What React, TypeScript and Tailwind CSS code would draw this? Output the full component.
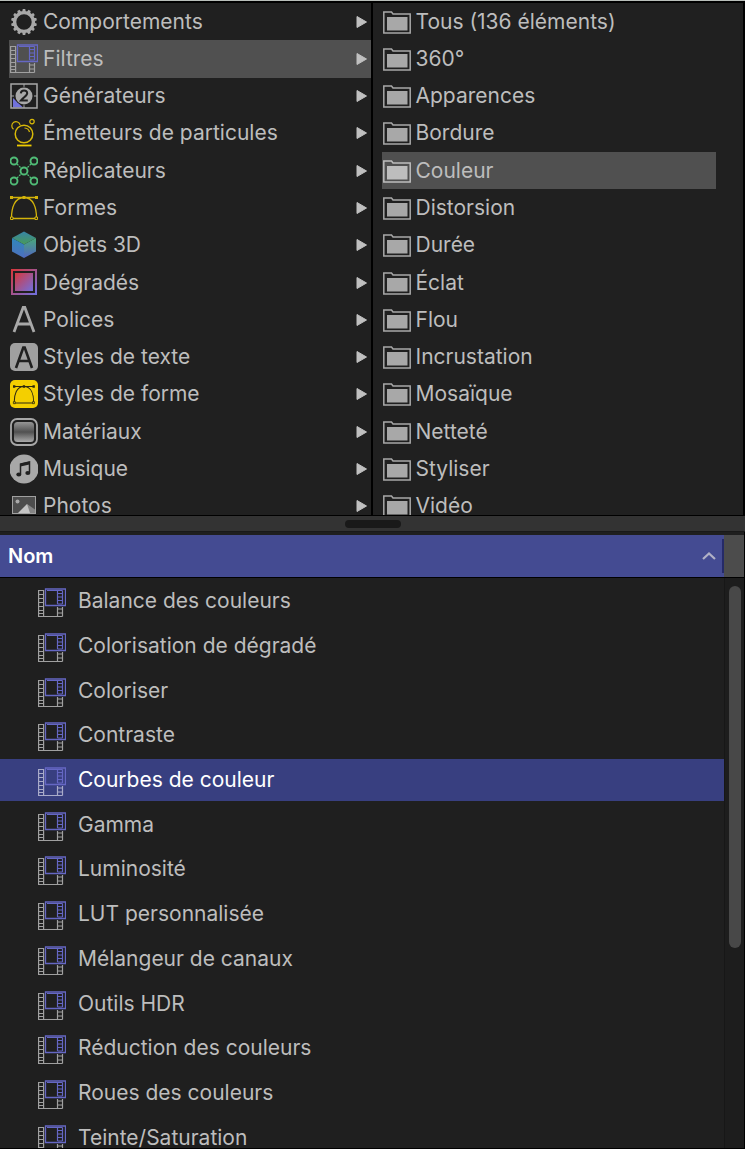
import { useState } from "react";
import type { ReactNode } from "react";
import clsx from "clsx";

type Categorie = {
    nom: string;
    icone: ReactNode;
};

const dossiers = [
    "Tous (136 éléments)", "360°", "Apparences", "Bordure", "Couleur", "Distorsion", "Durée",
    "Éclat", "Flou", "Incrustation", "Mosaïque", "Netteté", "Styliser", "Vidéo",
];

const filtres = [
    "Balance des couleurs", "Colorisation de dégradé", "Coloriser", "Contraste", "Courbes de couleur",
    "Gamma", "Luminosité", "LUT personnalisée", "Mélangeur de canaux", "Outils HDR",
    "Réduction des couleurs", "Roues des couleurs", "Teinte/Saturation",
];

function Icone({ children }: { children: ReactNode }) {
    return (
        <svg viewBox="0 0 28 30" className="w-7 h-[30px] shrink-0" fill="none" aria-hidden="true">
            {children}
        </svg>
    );
}

function IconeFiltre({ clair = false }: { clair?: boolean }) {
    const gris = clair ? "#a9abc9" : "#a0a0a0";
    return (
        <Icone>
            <path d="M.6 2.500h5v26h-5zM.5 6.500h5M.5 10.500h5M.5 14.500h5M.5 18.500h5M.5 22.500h5M.5 25.500h5" stroke={gris} strokeWidth="1.200" />
            <path d="M5 28.500h19.500M19.500 19v9.500M24.500 19v9.500M19.500 21h5M19.500 25h5" stroke={gris} strokeWidth="1.200" />
            <path d="M7.500 1h20v16.500h-20z" stroke="#6567c4" strokeWidth="1.300" />
            <path d="M9 2.500h15.500M19.500 2.500v13.500M24.500 2.500v13.500M19.500 5.500h5M19.500 9h5M19.500 12.500h5M19.500 16h5" stroke="#6567c4" strokeWidth="1.200" />
        </Icone>
    );
}

function IconeEngrenage() {
    const dents = Array.from({ length: 14 }, (_, i) => (i * 360) / 14);
    return (
        <Icone>
            <circle cx="14" cy="15" r="9.400" stroke="#a8a8a8" strokeWidth="3.400" />
            {dents.map((a) => (
                <path key={a} d="M12.200 4.800l.6-2.700h2.400l.6 2.700z" fill="#a8a8a8" transform={`rotate(${a} 14 15)`} />
            ))}
        </Icone>
    );
}

function IconeGenerateur() {
    return (
        <Icone>
            <path d="M3 17v9.500h10z" fill="#7172dc" />
            <rect x="1" y="3" width="26" height="24" stroke="#a8a8a8" strokeWidth="1.500" />
            <path d="M14 3v3M14 24v3M1 15h3M24 15h3" stroke="#a8a8a8" />
            <circle cx="14" cy="15" r="9.300" fill="#202020" />
            <circle cx="14" cy="15" r="8.500" fill="#a8a8a8" />
            <path d="M10.800 12.400c.2-3.900 6.400-3.900 6.400-.2 0 2.300-3.500 4-6.200 7.300h6.800" stroke="#202020" strokeWidth="2" />
        </Icone>
    );
}

function IconeEmetteur() {
    return (
        <Icone>
            <circle cx="14" cy="16" r="8.800" stroke="#d8b908" strokeWidth="1.500" />
            <path d="M3.500 11.200a4.200 4.200 0 1 1 6.600-4.300M14.500 10c2.800.3 4.500 1.700 5 4" stroke="#d8b908" strokeWidth="1.200" />
            <circle cx="22" cy="3.600" r="2.200" stroke="#d8b908" strokeWidth="1.200" />
            <path d="M7 27.500h14.500" stroke="#f0cc00" strokeWidth="1.800" />
        </Icone>
    );
}

function IconeReplicateur() {
    const points = [[4, 5], [24, 5], [14, 15], [4, 25], [24, 25]];
    return (
        <Icone>
            <path d="M7 8l4 4M21 8l-4 4M7 22l4-4M21 22l-4-4" stroke="#50bd77" strokeWidth="1.300" strokeDasharray="2 1" />
            {points.map(([x, y]) => (
                <circle key={`${x}-${y}`} cx={x} cy={y} r="3.500" stroke="#50bd77" strokeWidth="1.900" />
            ))}
        </Icone>
    );
}

function TraceForme({ couleur, fond }: { couleur: string; fond: string }) {
    return (
        <>
            <path d="M1.500 4.500h25M1.500 25.500h25M1.500 25C1.500 15 4.500 4.500 14 4.500S26.500 15 26.500 25" stroke={couleur} strokeWidth="1.300" />
            <path d="M0 3h3v3H0zM25 3h3v3h-3zM12.500 3h3v3h-3z" fill={couleur} />
            <path d="M.5 24h2.500v2.500H.5zM25 24h2.500v2.500H25z" fill={fond} stroke={couleur} />
        </>
    );
}

function IconeCube() {
    return (
        <Icone>
            <defs>
                <linearGradient id="cubeGauche" x1="0" y1="0" x2="0" y2="1">
                    <stop offset="0" stopColor="#2f87ba" />
                    <stop offset="1" stopColor="#4e6fbd" />
                </linearGradient>
                <linearGradient id="cubeDroite" x1="0" y1="0" x2="0" y2="1">
                    <stop offset="0" stopColor="#48a878" />
                    <stop offset="1" stopColor="#5265c2" />
                </linearGradient>
                <linearGradient id="cubeHaut" x1="0" y1="0" x2="0" y2="1">
                    <stop offset="0" stopColor="#3784a8" />
                    <stop offset="1" stopColor="#489a58" />
                </linearGradient>
            </defs>
            <path d="M14 1.500l12 6.500-12 6.500L2 8z" fill="url(#cubeHaut)" />
            <path d="M2 8l12 6.500v13.500L2 21.500z" fill="url(#cubeGauche)" />
            <path d="M26 8l-12 6.500v13.500l12-6.500z" fill="url(#cubeDroite)" />
        </Icone>
    );
}

function IconeDegrade() {
    return (
        <Icone>
            <defs>
                <linearGradient id="degrade" x1="0" y1="0" x2="1" y2="1">
                    <stop offset="0" stopColor="#d6383e" />
                    <stop offset="1" stopColor="#716fdd" />
                </linearGradient>
            </defs>
            <rect x="2" y="2" width="24" height="24" stroke="url(#degrade)" strokeWidth="2" />
            <rect x="5" y="5" width="18" height="18" fill="url(#degrade)" />
        </Icone>
    );
}

function IconeMateriau() {
    return (
        <Icone>
            <defs>
                <linearGradient id="materiau" x1="0" y1="0" x2="0" y2="1">
                    <stop offset="0" stopColor="#969696" />
                    <stop offset=".5" stopColor="#505050" />
                    <stop offset="1" stopColor="#aaaaaa" />
                </linearGradient>
            </defs>
            <rect x="1" y="2" width="26" height="26" rx="6" stroke="#a8a8a8" strokeWidth="1.800" />
            <rect x="4" y="5" width="20" height="20" rx="3.500" fill="url(#materiau)" />
        </Icone>
    );
}

function IconePhoto() {
    return (
        <Icone>
            <rect x="2.500" y="5.500" width="23" height="17" fill="#4d4d4d" stroke="#a0a0a0" />
            <circle cx="7.500" cy="10.500" r="2" fill="#a8a8a8" />
            <path d="M8 22l9-9L25 22z" fill="#c4c4c4" />
            <path d="M17 13L25 18.500V22h-5z" fill="#858585" />
        </Icone>
    );
}

function IconeDossier({ actif }: { actif: boolean }) {
    const gris = actif ? "#bdbdbd" : "#a8a8a8";
    return (
        <svg viewBox="0 0 28 24" className="w-7 h-6 shrink-0" fill="none" aria-hidden="true">
            <path d="M.8 23V2h7.700l1.500 2h17.200v19z" stroke={gris} strokeWidth="1.500" />
            <path d="M4 7h20.500v13.500H4z" fill={gris} />
        </svg>
    );
}

const categories: Categorie[] = [
    { nom: "Comportements", icone: <IconeEngrenage /> },
    { nom: "Filtres", icone: <IconeFiltre /> },
    { nom: "Générateurs", icone: <IconeGenerateur /> },
    { nom: "Émetteurs de particules", icone: <IconeEmetteur /> },
    { nom: "Réplicateurs", icone: <IconeReplicateur /> },
    { nom: "Formes", icone: <Icone><TraceForme couleur="#d3b30a" fond="#202020" /></Icone> },
    { nom: "Objets 3D", icone: <IconeCube /> },
    { nom: "Dégradés", icone: <IconeDegrade /> },
    {
        nom: "Polices",
        icone: <Icone><path d="M4 27L13.200 2.500h1.600L24 27M7.500 19h13" stroke="#a8a8a8" strokeWidth="2.800" /></Icone>,
    },
    {
        nom: "Styles de texte",
        icone: (
            <Icone>
                <rect y="1" width="28" height="28" rx="5" fill="#a0a0a0" />
                <path d="M6 26L13.300 5.500h1.400L22 26M8.700 19h10.600" stroke="#202020" strokeWidth="2.600" />
            </Icone>
        ),
    },
    {
        nom: "Styles de forme",
        icone: (
            <Icone>
                <rect y="1" width="28" height="28" rx="5" fill="#f4cf00" />
                <g transform="translate(3 4) scale(.78)">
                    <TraceForme couleur="#2b2810" fond="#f4cf00" />
                </g>
            </Icone>
        ),
    },
    { nom: "Matériaux", icone: <IconeMateriau /> },
    {
        nom: "Musique",
        icone: (
            <Icone>
                <circle cx="14" cy="15" r="14.500" fill="#a8a8a8" />
                <path d="M10.500 20V10l9-2v10.500" stroke="#202020" strokeWidth="1.500" />
                <path d="M10.500 9.500l9-2v3l-9 2z" fill="#202020" />
                <ellipse cx="8.800" cy="20.500" rx="2.500" ry="2" fill="#202020" />
                <ellipse cx="17.800" cy="19" rx="2.500" ry="2" fill="#202020" />
            </Icone>
        ),
    },
    { nom: "Photos", icone: <IconePhoto /> },
];

export default function App() {
    const [categorie, setCategorie] = useState("Filtres");
    const [dossier, setDossier] = useState("Couleur");
    const [filtre, setFiltre] = useState("Courbes de couleur");
    const [croissant, setCroissant] = useState(true);

    const liste = croissant ? filtres : [...filtres].reverse();

    return (
        <div className="h-screen flex flex-col overflow-hidden bg-[#1f1f1f] border-t border-[#b9beba] text-[21px] leading-6 text-[#bdbdbd] font-['Inter','Liberation_Sans',sans-serif]">
            <div className="grid grid-cols-2 h-[515px] shrink-0 overflow-hidden bg-[#202020] border-t-2 border-b border-black">
                <ul className="flex flex-col h-[522px] pl-[9px] border-r-2 border-black">
                    {categories.map((c) => (
                        <li key={c.nom} className="flex-1 flex min-h-0">
                            <button
                                type="button"
                                onClick={() => setCategorie(c.nom)}
                                className={clsx("flex-1 flex items-center pl-px pr-[3px] gap-[5px] text-left whitespace-nowrap", c.nom === categorie && "bg-[#505050]")}
                            >
                                {c.icone}
                                <span className="flex-1">{c.nom}</span>
                                <svg viewBox="0 0 12 14" className="w-3 h-3.5" aria-hidden="true">
                                    <path d="M1 1.500l9.500 5.500L1 12.500z" fill="#c0c0c0" stroke="#c0c0c0" strokeLinejoin="round" />
                                </svg>
                            </button>
                        </li>
                    ))}
                </ul>
                <ul className="flex flex-col h-[522px] pl-[9px] pr-[27px] border-r-2 border-black">
                    {dossiers.map((d) => (
                        <li key={d} className="flex-1 flex min-h-0">
                            <button
                                type="button"
                                onClick={() => setDossier(d)}
                                className={clsx("flex-1 flex items-center pl-px gap-[5px] text-left whitespace-nowrap", d === dossier && "bg-[#505050]")}
                            >
                                <IconeDossier actif={d === dossier} />
                                <span>{d}</span>
                            </button>
                        </li>
                    ))}
                </ul>
            </div>

            <div role="separator" className="h-4 shrink-0 flex items-center justify-center bg-[#333333] border-b border-[#191919]">
                <span className="w-14 h-2 rounded-full bg-[#191919]" />
            </div>

            <div className="flex-1 min-h-0 flex flex-col pt-[3px] border-r border-b border-black">
                <div className="h-[42px] shrink-0 flex bg-[#4c4c4c]">
                    <button
                        type="button"
                        onClick={() => setCroissant(!croissant)}
                        className="flex-1 flex items-center justify-between pl-2 bg-[#444b92] text-white text-xl font-semibold"
                    >
                        Nom
                        <span className="flex items-center gap-1.5">
                            <svg viewBox="0 0 14 8" className={clsx("w-3.5 h-2", !croissant && "rotate-180")} fill="none" aria-hidden="true">
                                <path d="M1 7l6-5.500L13 7" stroke="#b1b1c6" strokeWidth="2.200" />
                            </svg>
                            <span className="w-0.5 h-[34px] bg-[#252a68]" />
                        </span>
                    </button>
                    <span className="w-5" />
                </div>

                <div className="flex-1 min-h-0 flex overflow-hidden border-t border-black">
                    <ul className="flex-1 flex flex-col h-[582px] pt-px">
                        {liste.map((f) => (
                            <li key={f} className="flex-1 flex min-h-0 py-px">
                                <button
                                    type="button"
                                    onClick={() => setFiltre(f)}
                                    className={clsx("flex-1 flex items-center pl-[38px] gap-3 text-left", f === filtre && "bg-[#383f80] text-white")}
                                >
                                    <span className="pt-1"><IconeFiltre clair={f === filtre} /></span>
                                    {f}
                                </button>
                            </li>
                        ))}
                    </ul>
                    <div className="w-5 flex flex-col items-center pt-2 border-l border-[#171717] bg-[#1d1d1d]">
                        <div className="w-3 h-[362px] rounded-full bg-[#484848]" />
                    </div>
                </div>
            </div>
        </div>
    );
}
